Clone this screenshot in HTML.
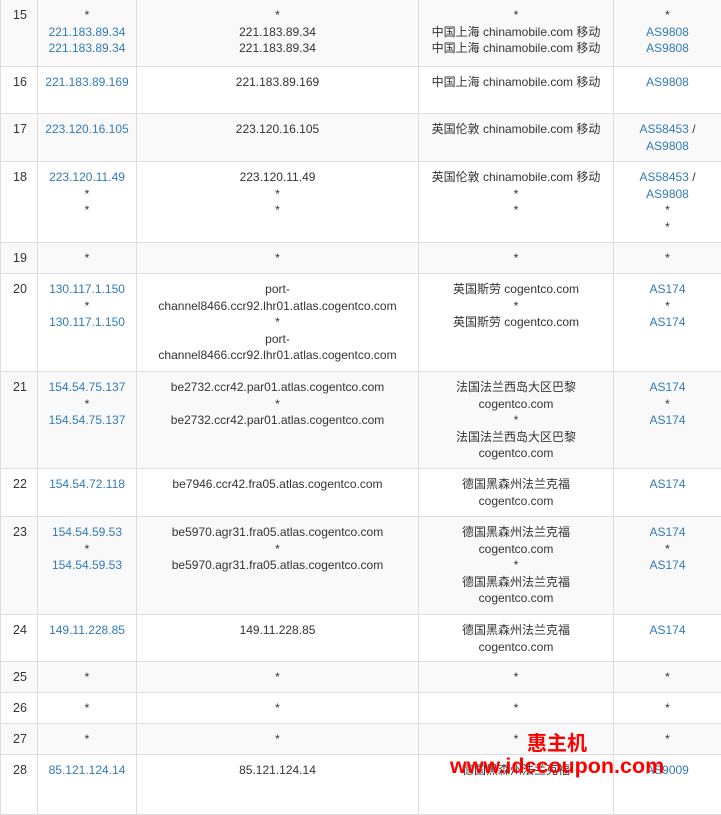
<!DOCTYPE html>
<html><head><meta charset="utf-8"><style>
body{margin:0;background:#fff;font-family:"Liberation Sans","Noto Sans CJK SC",sans-serif;font-size:12px;color:#333;}
table{position:absolute;left:0;top:-1px;border-collapse:collapse;table-layout:fixed;width:721px;}
td{border:1px solid #ddd;vertical-align:top;padding:7px 6px 0;line-height:16.5px;text-align:center;overflow:hidden}
td:first-child{text-align:left;padding-left:12px;font-size:12.5px}
tr.s td{background:#f9f9f9}
a{color:#337ab7;text-decoration:none}
.wm{position:absolute;color:#f00;font-weight:bold;font-family:"Liberation Sans","Noto Sans CJK SC",sans-serif;white-space:nowrap}
</style></head><body>
<table>
<colgroup><col style="width:37px"><col style="width:99px"><col style="width:282px"><col style="width:195px"><col style="width:108px"></colgroup>
<tr class="s" style="height:67px"><td>15</td><td>*<br><a>221.183.89.34</a><br><a>221.183.89.34</a></td><td>*<br>221.183.89.34<br>221.183.89.34</td><td>*<br>中国上海 chinamobile.com 移动<br>中国上海 chinamobile.com 移动</td><td>*<br><a>AS9808</a><br><a>AS9808</a></td></tr>
<tr style="height:47px"><td>16</td><td><a>221.183.89.169</a></td><td>221.183.89.169</td><td>中国上海 chinamobile.com 移动</td><td><a>AS9808</a></td></tr>
<tr class="s" style="height:48px"><td>17</td><td><a>223.120.16.105</a></td><td>223.120.16.105</td><td>英国伦敦 chinamobile.com 移动</td><td><a>AS58453</a> /<br><a>AS9808</a></td></tr>
<tr style="height:81px"><td>18</td><td><a>223.120.11.49</a><br>*<br>*</td><td>223.120.11.49<br>*<br>*</td><td>英国伦敦 chinamobile.com 移动<br>*<br>*</td><td><a>AS58453</a> /<br><a>AS9808</a><br>*<br>*</td></tr>
<tr class="s" style="height:31px"><td>19</td><td>*</td><td>*</td><td>*</td><td>*</td></tr>
<tr style="height:98px"><td>20</td><td><a>130.117.1.150</a><br>*<br><a>130.117.1.150</a></td><td>port-<br>channel8466.ccr92.lhr01.atlas.cogentco.com<br>*<br>port-<br>channel8466.ccr92.lhr01.atlas.cogentco.com</td><td>英国斯劳 cogentco.com<br>*<br>英国斯劳 cogentco.com</td><td><a>AS174</a><br>*<br><a>AS174</a></td></tr>
<tr class="s" style="height:97px"><td>21</td><td><a>154.54.75.137</a><br>*<br><a>154.54.75.137</a></td><td>be2732.ccr42.par01.atlas.cogentco.com<br>*<br>be2732.ccr42.par01.atlas.cogentco.com</td><td>法国法兰西岛大区巴黎<br>cogentco.com<br>*<br>法国法兰西岛大区巴黎<br>cogentco.com</td><td><a>AS174</a><br>*<br><a>AS174</a></td></tr>
<tr style="height:48px"><td>22</td><td><a>154.54.72.118</a></td><td>be7946.ccr42.fra05.atlas.cogentco.com</td><td>德国黑森州法兰克福<br>cogentco.com</td><td><a>AS174</a></td></tr>
<tr class="s" style="height:98px"><td>23</td><td><a>154.54.59.53</a><br>*<br><a>154.54.59.53</a></td><td>be5970.agr31.fra05.atlas.cogentco.com<br>*<br>be5970.agr31.fra05.atlas.cogentco.com</td><td>德国黑森州法兰克福<br>cogentco.com<br>*<br>德国黑森州法兰克福<br>cogentco.com</td><td><a>AS174</a><br>*<br><a>AS174</a></td></tr>
<tr style="height:47px"><td>24</td><td><a>149.11.228.85</a></td><td>149.11.228.85</td><td>德国黑森州法兰克福<br>cogentco.com</td><td><a>AS174</a></td></tr>
<tr class="s" style="height:31px"><td>25</td><td>*</td><td>*</td><td>*</td><td>*</td></tr>
<tr style="height:31px"><td>26</td><td>*</td><td>*</td><td>*</td><td>*</td></tr>
<tr class="s" style="height:31px"><td>27</td><td>*</td><td>*</td><td>*</td><td>*</td></tr>
<tr style="height:60px"><td>28</td><td><a>85.121.124.14</a></td><td>85.121.124.14</td><td>德国黑森州法兰克福</td><td><a>AS9009</a></td></tr>
</table>
<div class="wm" style="left:527px;top:727px;font-size:20px">惠主机</div>
<div class="wm" style="left:450px;top:754px;font-size:21.5px">www.idccoupon.com</div>
</body></html>
